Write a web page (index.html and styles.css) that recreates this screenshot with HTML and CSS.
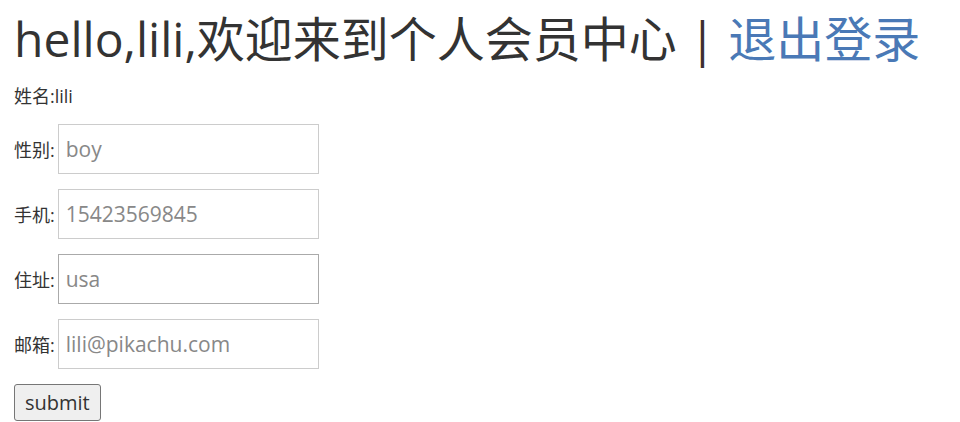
FILE: index.html
```html
<!DOCTYPE html>
<html lang="zh-CN">
<head>
    <meta charset="UTF-8">
    <meta name="viewport" content="width=device-width, initial-scale=1.0">
    <title>个人会员中心</title>
    <link rel="stylesheet" href="styles.css">
</head>
<body>
    <div class="page">
        <h1 class="title">hello,lili,欢迎来到个人会员中心 <span class="sep">|</span> <a href="#" class="logout">退出登录</a></h1>
        <p class="name">姓名:lili</p>
        <form action="" class="info">
            <div class="row">
                <label for="sex">性别:</label>
                <input id="sex" class="field" type="text" placeholder="boy">
            </div>
            <div class="row">
                <label for="phone">手机:</label>
                <input id="phone" class="field" type="text" placeholder="15423569845">
            </div>
            <div class="row">
                <label for="addr">住址:</label>
                <input id="addr" class="field active" type="text" placeholder="usa">
            </div>
            <div class="row">
                <label for="mail">邮箱:</label>
                <input id="mail" class="field" type="text" placeholder="lili@pikachu.com">
            </div>
            <div class="row">
                <input type="submit" value="submit" class="submit">
            </div>
        </form>
    </div>
</body>
</html>
```

FILE: styles.css
```css
html{
    font-family: "Open Sans", "Noto Sans CJK SC", sans-serif;
    color: #333;
}
body{
    margin: 0;
}
.page{
    padding: 0 14px;
}
.title{
    font-size: 48px;
    font-weight: normal;
    margin: 13px 0 16px;
    line-height: 1.1;
}
.sep{
    color: #3d2f2f;
}
.logout{
    color: #4a79b6;
    text-decoration: none;
}
.name{
    font-size: 18px;
    margin: 0 0 16px;
}
.info{
    display: flex;
    flex-direction: column;
    gap: 15px;
}
.row{
    display: flex;
    align-items: center;
    font-size: 18px;
}
.row label{
    margin-right: 3px;
}
.field{
    box-sizing: border-box;
    width: 261px;
    height: 50px;
    border: 1px solid #ccc;
    padding: 0 7px;
    font-family: "Open Sans", sans-serif;
    font-size: 21px;
    outline: none;
}
.field::placeholder{
    color: #888;
}
.active{
    border-color: #aaa;
}
.submit{
    font-family: "Open Sans", sans-serif;
    font-size: 20px;
    padding: 0 10px;
    height: 37px;
    color: #333;
    background: #efefef;
    border: 1px solid #767676;
    border-radius: 3px;
}
```
